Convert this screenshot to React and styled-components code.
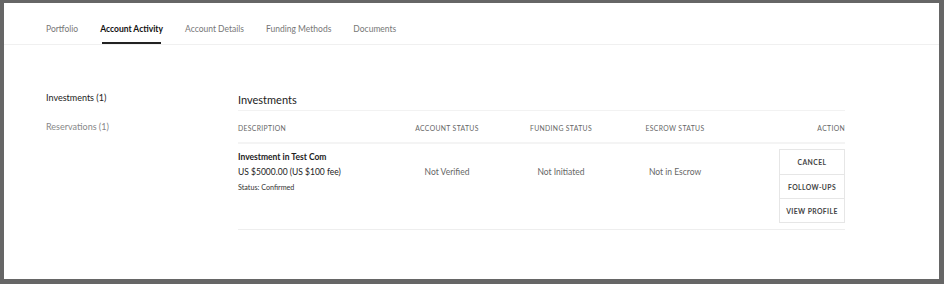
import React from 'react'
import styled, { createGlobalStyle } from 'styled-components'

const Global = createGlobalStyle`
  html, body {
    margin: 0;
    padding: 0;
    background: #666666;
  }
  body {
    font-family: Lato, "Open Sans", sans-serif;
    color: #222;
  }
`

const tabs = ['Portfolio', 'Account Activity', 'Account Details', 'Funding Methods', 'Documents']

const columns = [
  { label: 'Description', align: 'left' },
  { label: 'Account Status', align: 'center' },
  { label: 'Funding Status', align: 'center' },
  { label: 'Escrow Status', align: 'center' },
  { label: 'Action', align: 'right' },
]

function App() {
  return (
    <>
      <Global />
      <Frame>
        <Panel>
          <TabBar>
            {tabs.map((t, i) => (
              <Tab key={t} active={i === 1}>{t}</Tab>
            ))}
          </TabBar>
          <Body>
            <Side>
              <SideLink active>Investments (1)</SideLink>
              <SideLink>Reservations (1)</SideLink>
            </Side>
            <Main>
              <Title>Investments</Title>
              <HeadRow>
                {columns.map(c => (
                  <HeadCell key={c.label} align={c.align}>{c.label}</HeadCell>
                ))}
              </HeadRow>
              <Row>
                <Desc>
                  <Name>Investment in Test Com</Name>
                  <Amount>US $5000.00 (US $100 fee)</Amount>
                  <Status>Status: Confirmed</Status>
                </Desc>
                <Value>Not Verified</Value>
                <Value>Not Initiated</Value>
                <Value>Not in Escrow</Value>
                <Actions>
                  <ButtonGroup>
                    <ActionBtn>Cancel</ActionBtn>
                    <ActionBtn>Follow-ups</ActionBtn>
                    <ActionBtn>View Profile</ActionBtn>
                  </ButtonGroup>
                </Actions>
              </Row>
            </Main>
          </Body>
        </Panel>
      </Frame>
    </>
  )
}

export default App

const Frame = styled.div`
  height: 284px;
  box-sizing: border-box;
  padding: 3px 5px 5px 4px;
`

const Panel = styled.div`
  background: #fff;
  height: 100%;
`

const TabBar = styled.div`
  display: flex;
  gap: 22px;
  padding-left: 42px;
  height: 41px;
  border-bottom: 1px solid #f0f0f0;
`

const Tab = styled.a`
  display: flex;
  align-items: center;
  padding-top: 10px;
  font-size: 8.5px;
  color: ${p => (p.active ? '#111' : '#777')};
  font-weight: ${p => (p.active ? 700 : 400)};
  position: relative;
  &::after {
    content: '';
    display: ${p => (p.active ? 'block' : 'none')};
    position: absolute;
    left: 2px;
    right: 2px;
    bottom: 0;
    height: 2px;
    background: #222;
  }
`

const Body = styled.div`
  display: flex;
  padding: 47px 94px 0 42px;
`

const Side = styled.div`
  width: 192px;
  display: flex;
  flex-direction: column;
  gap: 17px;
`

const SideLink = styled.a`
  font-size: 9px;
  line-height: 12px;
  color: ${p => (p.active ? '#222' : '#888')};
`

const Main = styled.div`
  flex: 1;
`

const Title = styled.div`
  font-size: 11px;
  line-height: 15px;
  padding-bottom: 3px;
  border-bottom: 1px solid #f2f2f2;
`

const grid = `
  display: grid;
  grid-template-columns: 152px 114px 114px 114px 1fr;
`

const HeadRow = styled.div`
  ${grid}
  align-items: center;
  height: 33px;
  padding-top: 3px;
  box-sizing: border-box;
  border-bottom: 2px solid #f4f4f4;
`

const HeadCell = styled.div`
  font-size: 6.8px;
  letter-spacing: 0.35px;
  text-transform: uppercase;
  color: #666;
  text-align: ${p => p.align};
`

const Row = styled.div`
  ${grid}
  align-items: start;
  padding: 5px 0 6px;
  border-bottom: 1px solid #eee;
`

const Desc = styled.div`
  padding-top: 1px;
`

const Name = styled.div`
  font-size: 8.5px;
  font-weight: 700;
  line-height: 15px;
`

const Amount = styled.div`
  font-size: 8.5px;
  line-height: 15px;
`

const Status = styled.div`
  font-size: 7.2px;
  line-height: 15px;
  color: #333;
`

const Value = styled.div`
  padding-top: 16px;
  font-size: 8.5px;
  line-height: 15px;
  color: #666;
  text-align: center;
`

const Actions = styled.div`
  display: flex;
  justify-content: flex-end;
`

const ButtonGroup = styled.div`
  display: flex;
  flex-direction: column;
  box-sizing: border-box;
  width: 66px;
  border: 1px solid #e6e6e6;
`

const ActionBtn = styled.button`
  all: unset;
  box-sizing: border-box;
  height: 24px;
  text-align: center;
  font-family: Lato, sans-serif;
  font-size: 6.8px;
  font-weight: 700;
  letter-spacing: 0.4px;
  text-transform: uppercase;
  color: #444;
  & + & {
    border-top: 1px solid #e6e6e6;
  }
`
